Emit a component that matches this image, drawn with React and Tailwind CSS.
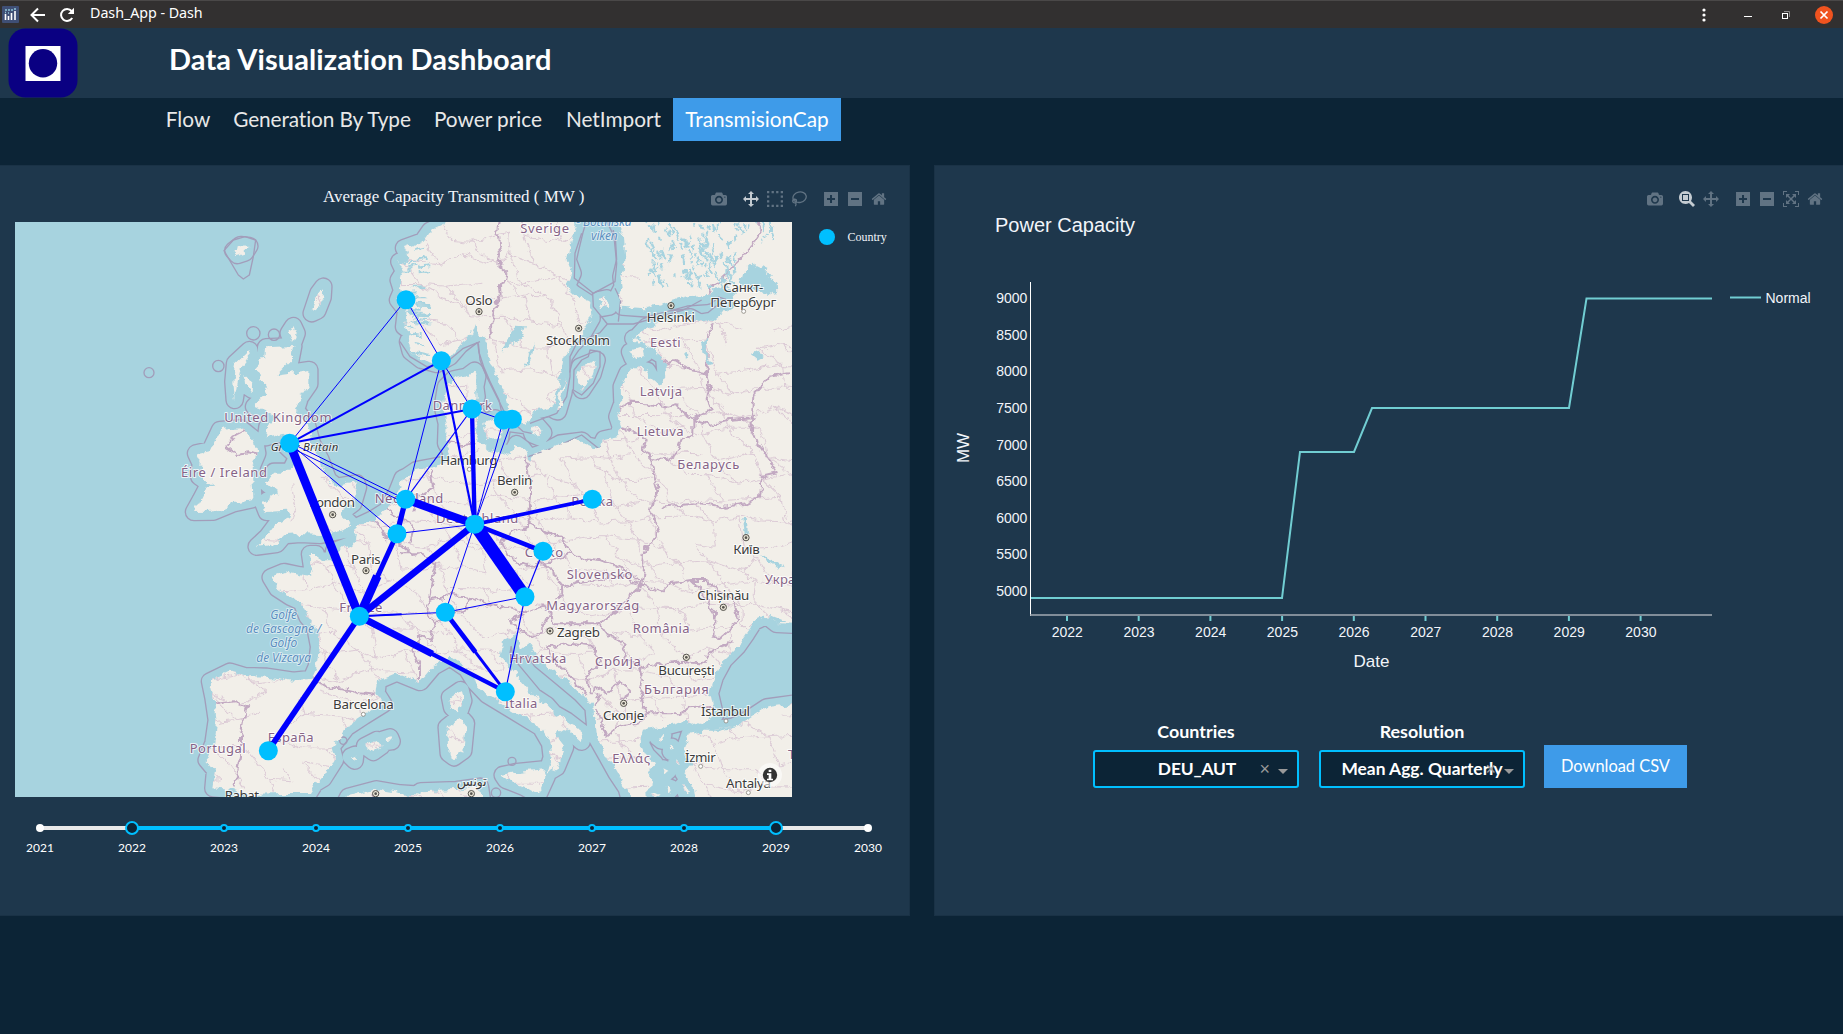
import React from "react";

/* ---------- toolbar icons ---------- */
const ICONS = {
  camera: [1000, "m500 450c-83 0-150-67-150-150 0-83 67-150 150-150 83 0 150 67 150 150 0 83-67 150-150 150z m400 150h-120c-16 0-34 13-39 29l-31 93c-6 15-23 28-40 28h-340c-16 0-34-13-39-28l-31-94c-6-15-23-28-40-28h-120c-55 0-100-45-100-100v-450c0-55 45-100 100-100h800c55 0 100 45 100 100v450c0 55-45 100-100 100z m-400-550c-138 0-250 112-250 250 0 138 112 250 250 250 138 0 250-112 250-250 0-138-112-250-250-250z m365 380c-19 0-35 16-35 35 0 19 16 35 35 35 19 0 35-16 35-35 0-19-16-35-35-35z"],
  zoom: [1000, "m1000-25l-250 251c40 63 63 138 63 218 0 224-182 406-407 406-224 0-406-182-406-406s183-406 407-406c80 0 155 22 218 62l250-250 125 125z m-812 250l0 438 437 0 0-438-437 0z m62 375l313 0 0-312-313 0 0 312z"],
  pan: [1000, "m1000 350l-187 188 0-125-250 0 0 250 125 0-188 187-187-187 125 0 0-250-250 0 0 125-188-188 186-187 0 125 252 0 0-250-125 0 187-188 188 188-125 0 0 250 250 0 0-126 187 188z"],
  plus: [875, "m1 787l0-875 875 0 0 875-875 0z m687-500l-187 0 0-187-125 0 0 187-188 0 0 125 188 0 0 187 125 0 0-187 187 0 0-125z"],
  minus: [875, "m0 788l0-876 875 0 0 876-875 0z m688-500l-500 0 0 125 500 0 0-125z"],
  auto: [1000, "m250 850l-187 0-63 0 0-62 0-188 63 0 0 188 187 0 0 62z m688 0l-188 0 0-62 188 0 0-188 62 0 0 188 0 62-62 0z m-875-938l0 188-63 0 0-188 0-62 63 0 187 0 0 62-187 0z m875 188l0-188-188 0 0-62 188 0 62 0 0 62 0 188-62 0z m-125 188l-1 0-93-94-156 156 156 156 92-93 2 0 0 250-250 0 0-2 93-92-156-156-156 156 94 92 0 2-250 0 0-250 0 0 93 93 157-156-157-156-93 94 0 0 0-250 250 0 0 0-94 93 156 157 156-157-93-93 0 0 250 0 0 250z"],
  home: [928.6, "m786 296v-267q0-15-11-26t-25-10h-214v214h-143v-214h-214q-15 0-25 10t-11 26v267q0 1 0 2t0 2l321 264 321-264q1-1 1-4z m124 39l-34-41q-5-5-12-6h-2q-7 0-12 3l-386 322-386-322q-7-4-13-4-7 2-12 7l-35 41q-4 5-3 13t6 12l401 334q18 15 42 15t43-15l136-114v109q0 8 5 13t13 5h107q8 0 13-5t5-13v-227l122-102q5-5 6-12t-4-13z"],
  select: [1000, "m0 850l0-143 143 0 0 143-143 0z m286 0l0-143 143 0 0 143-143 0z m285 0l0-143 143 0 0 143-143 0z m286 0l0-143 143 0 0 143-143 0z m-857-286l0-143 143 0 0 143-143 0z m857 0l0-143 143 0 0 143-143 0z m-857-285l0-143 143 0 0 143-143 0z m857 0l0-143 143 0 0 143-143 0z m-857-286l0-143 143 0 0 143-143 0z m286 0l0-143 143 0 0 143-143 0z m285 0l0-143 143 0 0 143-143 0z m286 0l0-143 143 0 0 143-143 0z"],
};

function ToolIcon({ name, active }) {
  const tone = active ? "text-[#c4cbd1]" : "text-[#617383]";
  if (name === "lasso") {
    return (
      <svg className={`h-4 w-4 ${tone}`} viewBox="0 0 16 16" fill="none" stroke="currentColor" strokeWidth="1.3">
        <ellipse cx="8.6" cy="6.2" rx="6.7" ry="5.2" transform="rotate(-12 8.6 6.2)" />
        <circle cx="3.6" cy="10" r="1.9" />
        <path d="M4.6 11.6Q5.6 13 4.4 15.2M2 9Q3.5 7.5 5.5 9.5" />
      </svg>
    );
  }
  const [w, d] = ICONS[name];
  return (
    <svg className={`h-4 w-4 ${tone}`} viewBox={`0 0 ${w} 1000`} fill="currentColor">
      <path d={d} transform="matrix(1 0 0 -1 0 850)" />
    </svg>
  );
}

function Toolbar({ groups, active }) {
  return (
    <div className="flex gap-4">
      {groups.map((g, i) => (
        <div key={i} className="flex gap-2">
          {g.map((n) => <ToolIcon key={n} name={n} active={n === active} />)}
        </div>
      ))}
    </div>
  );
}

/* ---------- map geometry: three units per pixel ---------- */
const shift = (dx, dy, s) =>
  s.trim().split(/\s+/).map((p) => {
    const [x, y] = p.split(",").map(Number);
    return `${x + dx},${y + dy}`;
  }).join(" ");
const nw = (s) => shift(0, 480, s);
const ne = (s) => shift(1200, 630, s);
const sw = (s) => shift(0, 1440, s);
const se = (s) => shift(1200, 1440, s);
const closed = (...p) => `M${p.join(" ")}Z`;

const SCANDINAVIA = closed(
  nw("1350,100 1345,186 1290,212 1268,244 1212,264 1225,292 1198,305 1212,335 1196,360 1206,392 1194,420 1218,450 1212,500 1236,518 1224,545 1232,575 1265,600"),
  ne("75,452 110,462 150,440 180,405 215,378 228,345 240,372 258,385 262,420 275,460 292,500 322,562 330,600 332,640 376,646 395,604 452,592 470,560 480,500 492,440 515,405 548,372 575,325 570,282 520,250 500,230 518,190 503,150 512,110 524,60 560,-60")
);
const MAINLAND = closed(
  ne("645,-60 650,36 672,80 676,150 664,200 668,230 655,255 668,290 735,295 800,278 860,262 920,258 950,232 1000,248 1005,285 960,312 935,332 900,338 870,322 800,330 740,350 712,380 742,410 792,440 797,500 780,525 755,505 742,482 708,474 682,490 665,530 667,580 652,620 662,650 655,678 612,688 600,715 560,706 545,692 482,700 430,728 388,742 368,716 350,702 332,735 300,722 262,716 236,690 225,660 238,625 218,598 230,560 226,530 232,500 224,482 200,500 160,508 138,530 128,590 140,640 138,700 156,728 145,762 92,772 50,780 20,800"),
  sw("1208,-5 1190,40 1160,92 1118,118 1070,140 1064,190 1002,214 1000,240 950,242 948,222 930,222 940,290 900,286 852,276 812,292 832,325 870,350 905,366 922,410 945,438 957,500 950,560 934,596 880,602 800,590 732,588 690,575 630,604 640,652 650,720 640,790 620,840 645,870 640,925 700,930 740,945 850,942 925,942 945,910 970,895 1005,840 995,800 1040,742 1092,708 1150,672 1130,640 1134,602 1190,578 1260,606"),
  se("62,605 100,560 150,532 200,566 225,606 262,645 340,692 422,742 450,790 455,832 440,880 470,862 495,802 468,765 500,745 545,785 550,760 500,722 462,700 440,675 402,650 352,590 302,530 310,482 352,460 362,510 388,490 422,540 482,590 542,640 580,680 588,770 622,830 650,880 680,925 700,1000 745,1000 742,930 765,910 748,870 765,850 740,825 722,790 735,752 782,744 862,722 900,738 945,705 930,640 945,590 972,540 1012,500 1040,460 1062,425 1100,408 1130,432 1300,440"),
  "2600,500"
);
const ANATOLIA = closed(se("868,764 920,750 1000,740 1050,715 1100,682 1300,655 1300,1100 905,1100 880,910 850,880 878,850 850,820"));
const BRITAIN = closed(
  nw("798,562 880,558 872,600 826,645 928,630 928,672 900,712 888,750 920,792 936,850 962,900 985,960 1010,980 1070,970"),
  sw("1074,22 1060,70 1020,100 1050,130 1035,150 960,165 900,162 852,166 830,192 770,200 802,170 832,130 872,110 860,92 800,96 790,70 832,40"),
  nw("836,1000 800,970 822,935 870,935 892,890 860,860 880,840 850,818 798,832 802,800 832,768 762,740 802,700 780,660 770,620 796,592")
);
const IRELAND = closed(nw("660,810 722,805 765,840 772,880 755,920 760,1010"), sw("755,58 700,70 640,95 582,96 602,60 622,22"), nw("640,980 598,950 602,910 588,880 632,870 646,840"));
const AFRICA = closed(sw("1020,1000 1045,950 1130,928 1200,940 1262,944"), se("62,934 170,930 240,920 252,1000"));
const ISLANDS = [
  closed(nw("700,665 705,610 748,570 750,590 722,625 712,670 704,720")),
  closed(nw("730,640 760,665 758,690 735,675")),
  closed(nw("866,520 880,498 890,520 880,548")),
  closed(nw("935,460 955,400 970,380 968,412 952,452")),
  closed(nw("700,272 722,255 748,258 735,278 712,285")),
  closed(ne("530,510 540,470 590,450 578,492 546,540")),
  closed(ne("466,602 480,550 496,508 490,550 474,604")),
  closed(ne("392,655 410,645 430,668 418,682 398,674")),
  closed(ne("250,640 285,625 308,645 300,685 262,690")),
  closed(ne("690,425 730,412 735,432 698,445")),
  closed(ne("700,385 722,380 728,395 708,398")),
  closed(ne("596,270 620,265 628,290 606,294")),
  closed(se("308,885 350,876 432,868 440,890 415,945 370,920 318,900")),
  closed(se("140,742 180,710 198,730 190,812 162,832 146,820")),
  closed(se("150,652 182,630 190,662 176,702 156,682")),
  closed(sw("1095,798 1130,780 1145,798 1120,816")),
  closed(sw("1150,778 1170,772 1175,784 1158,786")),
  closed(sw("1052,830 1066,824 1064,842")),
  closed(se("770,770 790,765 785,782")), closed(se("815,800 825,812 812,815")), closed(se("830,840 842,850 828,852")),
  closed(se("790,865 805,872 796,880")), closed(se("800,920 815,925 806,935")), closed(se("850,915 870,925 858,940")), closed(se("760,935 780,945 766,955")),
];
const LAND = [SCANDINAVIA, MAINLAND, ANATOLIA, BRITAIN, IRELAND, AFRICA, ...ISLANDS].join(" ");

const LAKES = [
  closed(ne("1020,225 1030,190 1060,160 1100,180 1130,220 1132,255 1090,245 1050,238")),
  closed(ne("305,425 322,385 345,350 375,352 362,385 330,405")),
  closed(ne("378,470 384,430 402,400 396,440")),
  closed(ne("905,395 925,380 920,440 942,462 925,465 912,430")),
  closed(ne("1052,432 1072,422 1088,436 1070,446")),
  closed(ne("850,430 860,426 862,440 852,446")),
  closed(se("890,745 930,735 985,735 1010,742 960,752 910,752")),
  closed(se("1080,222 1110,235 1150,262 1130,258 1100,240")),
  closed(se("1030,120 1040,120 1044,160 1034,162")),
  closed(se("1070,430 1110,405 1160,425 1110,440")),
].join(" ");

const line = (s) => `M${s}`;
const COUNTRY_BORDERS = [
  ne("300,0 292,60 300,130 295,165 322,190 318,215 300,222 302,260 280,300 270,350 275,385"),
  ne("1062,20 1082,60 1050,110 1000,170 940,225 920,262"),
  ne("940,340 920,380 920,440 920,490 930,520 920,570 935,600 880,630"),
  ne("750,480 780,462 825,450 870,480 920,490"),
  ne("655,600 690,578 750,580 800,590 830,582 850,605 880,630 880,670 845,690 830,730"),
  ne("662,652 700,662 740,690 732,722 760,748 800,750 832,730"),
  ne("880,630 930,645 990,630 1060,625 1055,670 1100,740 1130,790 1085,800 1080,860 1040,880 980,890 900,880 780,890"),
  ne("1055,625 1060,560 1110,500 1170,490"),
  ne("750,740 760,800 772,840 755,900"),
  ne("375,740 390,790 390,850 385,900"),
  se("385,60 395,100 380,140 330,155 300,190 340,240 380,255"),
  se("385,130 430,150 490,175 520,220 550,235 600,240 640,255 720,300"),
  se("380,255 430,250 490,230 520,215"),
  se("755,90 775,150 735,220 730,280 722,322"),
  se("480,330 530,310 600,300 640,280 720,310 785,335"),
  se("470,360 490,330 470,280 430,250"),
  se("440,400 470,430 530,430 600,430 660,380 720,325"),
  se("785,335 810,310 880,300 920,300 950,330 1000,360 1015,420 960,470 940,470 945,400 900,330 880,300"),
  se("600,430 630,470 680,490 672,540 735,560 830,545 900,550 960,500 1000,490"),
  se("675,540 720,560 732,600 720,650 745,700 840,700 870,685 940,680"),
  se("440,500 460,540 520,600 560,650"),
  se("440,500 500,490 580,500 600,550 560,590 570,640 590,620 620,640 660,600 690,640 660,660"),
  se("590,690 620,770 660,740 720,730 740,700"),
  se("580,680 600,640"),
  se("370,405 330,420 360,455 400,470 430,440 450,400 430,380 380,400 340,385 260,370 210,350 200,390 160,400 110,430"),
  se("210,350 150,345 90,360 80,400 110,430 90,480 60,470 40,510 60,560 60,600"),
  se("90,360 100,290 110,250 60,220 0,220"),
  sw("1115,118 1140,140 1160,180 1200,190 1240,225 1260,220"),
  sw("1160,90 1190,110 1230,120 1240,150 1230,190"),
  sw("1240,100 1250,50 1300,20 1290,-30"),
  sw("932,590 980,620 1040,630 1080,640 1130,645"),
  sw("640,672 700,660 745,680 730,720 720,770 720,830 710,880 700,925"),
  nw("740,808 700,830 675,860 710,885 750,880 780,890"),
  ne("140,700 190,705 230,700"),
  sw("1115,951 1130,935"),
].map(line).join(" ");

/* irregular cell mesh standing for regional borders */
function mesh() {
  const rnd = (a, b) => {
    const v = Math.sin(a * 127.1 + b * 311.7) * 43758.5453;
    return v - Math.floor(v);
  };
  const out = [];
  const W = 82, H = 66;
  const p = (i, j) => {
    const x = 400 + i * W + (j % 2 ? W / 2 : 0) + (rnd(i, j) - 0.5) * 50;
    const y = 640 + j * H + (rnd(j + 40, i + 9) - 0.5) * 44;
    return [x.toFixed(0), y.toFixed(0)];
  };
  for (let j = 0; j < 28; j++) {
    for (let i = 0; i < 25; i++) {
      const a = p(i, j);
      const finland = j < 5 && i > 17;
      const britain = j < 15 && i < 7;
      if (finland || britain) continue;
      if (rnd(i + 3, j + 7) > 0.22) out.push(`M${a}L${p(i + 1, j)}`);
      if (rnd(i + 13, j + 2) > 0.35) out.push(`M${a}L${p(i + (j % 2 ? 1 : 0), j + 1)}`);
    }
  }
  return out.join("");
}
const REGION_MESH = mesh() + "M875,1450L885,1530L870,1570";

function speckle() {
  const out = [];
  for (let i = 0; i < 170; i++) {
    const a = Math.abs(Math.sin(i * 12.9898) * 43758.5) % 1;
    const b = Math.abs(Math.sin(i * 78.233) * 12543.1) % 1;
    const c = Math.abs(Math.sin(i * 39.11) * 9543.7) % 1;
    const x = 1940 + a * 270 + (b < 0.3 ? a * 110 : 0);
    const y = 660 + b * 190;
    out.push(`M${x.toFixed(0)},${y.toFixed(0)}l${(c * 16 - 5).toFixed(0)},${(6 + c * 18).toFixed(0)}`);
  }
  for (let i = 0; i < 45; i++) {
    const a = Math.abs(Math.sin(i * 5.17) * 4358.5) % 1;
    const b = Math.abs(Math.sin(i * 8.91) * 1543.1) % 1;
    out.push(`M${(1205 + a * 50).toFixed(0)},${(740 + b * 320).toFixed(0)}l${(10 + a * 28).toFixed(0)},${(b * 16 - 8).toFixed(0)}`);
  }
  return out.join("");
}
const LAKE_SPECKLE = speckle();

const SEA_LINES = [
  closed(nw("672,272 700,240 735,230 767,240 760,290 748,345 730,357 715,345")),
  line(ne("545,70 525,130 523,205 580,250 645,215 650,160 640,60")),
  line(ne("578,250 580,290 622,342 700,342 760,325 850,300 905,270")),
  line(ne("622,342 600,368 530,400 510,440 510,500 500,560 470,610 430,625 390,640")),
  closed(ne("520,540 522,480 545,450 565,440 570,420 600,425 600,470 580,520 545,555")),
  line(ne("645,235 662,270 655,335")),
  line(ne("600,710 640,722 725,722")),
  line(ne("385,740 470,710 545,675 595,715")),
  line(ne("235,400 240,450 260,500 290,560 320,620 370,665 395,670")),
  line(ne("0,395 30,440 80,470 130,465 190,415 240,395")),
].join(" ");

const DOTS = [[447, 1118, 15], [655, 1098, 17], [760, 1000, 20], [822, 1004, 17], [1030, 2222, 11], [1488, 2378, 14], [1536, 2284, 12]];

const COUNTRIES = [
  ["United Kingdom", 673, 1266, 322], ["Éire / Ireland", 543, 1430, 258], ["Sverige", 1561, 698, 146],
  ["Danmark", 1298, 1231, 178], ["Eesti", 1950, 1041, 92], ["Latvija", 1919, 1189, 127], ["Lietuva", 1910, 1308, 141],
  ["Беларусь", 2032, 1407, 186], ["Nederland", 1124, 1508, 206], ["Deutschland", 1308, 1569, 247], ["Polska", 1714, 1518, 125],
  ["Česko", 1574, 1670, 115], ["Slovensko", 1700, 1738, 197], ["Magyarország", 1639, 1830, 279], ["România", 1898, 1899, 171],
  ["Hrvatska", 1527, 1989, 172], ["Србија", 1785, 1999, 137], ["България", 1932, 2083, 194], ["Italia", 1514, 2123, 98],
  ["Ελλάς", 1837, 2289, 113], ["España", 803, 2226, 138], ["Portugal", 569, 2258, 168], ["France", 1018, 1837, 129],
  ["Україна", 2294, 1751, 150], ["Türkiye", 2364, 2276, 140],
];
const CITIES = [
  ["Oslo", 1396, 915, 82, 1437, 935], ["Stockholm", 1638, 1035, 192, 1736, 985], ["Helsinki", 1940, 965, 145, 2013, 917],
  ["Санкт-", 2170, 875, 120], ["Петербург", 2131, 921, 198], ["Hamburg", 1321, 1394, 171], ["Berlin", 1491, 1456, 106, 1544, 1477],
  ["London", 928, 1522, 137, 998, 1544], ["Paris", 1053, 1691, 89, 1098, 1712], ["Київ", 2200, 1661, 79, 2238, 1613],
  ["Chișinău", 2092, 1801, 156, 2170, 1822], ["Zagreb", 1671, 1911, 129, 1650, 1893], ["București", 1975, 2025, 169, 2059, 1972],
  ["Скопје", 1809, 2160, 123, 1871, 2110], ["İstanbul", 2103, 2148, 147], ["İzmir", 2055, 2285, 92], ["Antalya", 2178, 2363, 135],
  ["Barcelona", 999, 2128, 182], ["Rabat", 674, 2401, 103], ["تونس", 1370, 2358, 90, 1414, 2381],
];
const SMALL_TOWNS = [[2178, 2163], [2102, 2299], [2245, 2378], [1090, 2143], [1408, 1408], [2231, 934]];
const SEAS = [
  ["- Bottniska", 1729, 679, 166], ["viken", 1773, 721, 80], ["Golfe", 811, 1857, 80], ["de Gascogne /", 738, 1899, 226],
  ["Golfo", 809, 1942, 83], ["de Vizcaya", 769, 1985, 164],
];

const N = {
  bergen: [1218, 899], kris: [1324, 1082], dk: [1416, 1227], se1: [1510, 1260], se2: [1537, 1258], gb: [869, 1330],
  nl: [1217, 1498], be: [1191, 1601], de: [1424, 1573], pl: [1777, 1498], cz: [1629, 1654], at: [1575, 1790],
  ch: [1336, 1837], fr: [1078, 1849], it: [1516, 2075], es: [805, 2252],
};
const LINKS = [
  [N.gb, N.fr, 26], [N.de, N.at, 38], [N.nl, N.de, 24], [N.fr, N.de, 20], [N.dk, N.de, 13], [N.fr, N.es, 17], [N.nl, N.be, 16],
  [N.be, N.fr, 15], [N.fr, [1132, 1728], 26], [N.fr, N.it, 13], [N.fr, [1297, 1962], 21], [N.ch, N.it, 9], [N.ch, [1426, 1956], 14],
  [N.de, N.cz, 14], [N.de, N.pl, 11], [N.gb, N.kris, 6], [N.gb, N.dk, 6], [N.kris, N.de, 6.5], [N.fr, [1205, 1843], 6],
  [N.gb, N.bergen, 3], [[875, 1330], N.nl, 3], [[862, 1338], [1217, 1510], 3], [N.gb, N.be, 3], [N.bergen, N.kris, 3], [N.kris, N.dk, 3],
  [N.kris, N.nl, 3], [N.dk, N.nl, 3.5], [N.dk, N.se1, 3], [N.se1, N.de, 3], [N.se2, N.de, 3], [N.be, N.de, 3], [N.de, N.ch, 3],
  [N.ch, N.at, 3], [N.ch, N.fr, 3], [N.cz, N.at, 3.5], [N.at, N.it, 3.5],
];

function EuropeMap() {
  return (
    <svg className="block h-[575px] w-[777px]" viewBox="45 666 2331 1725" fontFamily='"Noto Sans", "DejaVu Sans", sans-serif'>
      <defs>
        <filter id="coast" filterUnits="userSpaceOnUse" x="45" y="620" width="2340" height="1780">
          <feTurbulence type="fractalNoise" baseFrequency="0.035" numOctaves="4" seed="4" />
          <feDisplacementMap in="SourceGraphic" scale="28" xChannelSelector="R" yChannelSelector="G" />
        </filter>
        <clipPath id="onLand"><path d={LAND} /></clipPath>
      </defs>
      <rect x="45" y="666" width="2331" height="1725" fill="#a7d3df" />
      <g strokeLinejoin="round">
        <path d={LAND} fill="none" stroke="#a29dba" strokeWidth="56" />
        <path d={LAND} fill="none" stroke="#a7d3df" strokeWidth="48" />
      </g>
      <g fill="none" stroke="#a29dba" strokeWidth="4" strokeLinejoin="round">
        <path d={SEA_LINES} />
        {DOTS.map(([x, y, r], i) => <circle key={i} cx={x} cy={y} r={r} />)}
      </g>
      <g filter="url(#coast)">
        <path d={LAND} fill="#f2efe9" />
        <g clipPath="url(#onLand)" fill="none">
          <path d={REGION_MESH} stroke="#dccbd6" strokeWidth="3.2" />
          <path d={COUNTRY_BORDERS} stroke="#c2a9c2" strokeWidth="6" strokeLinejoin="round" />
          <path d={LAKES} fill="#a7d3df" />
          <path d={LAKE_SPECKLE} stroke="#a7d3df" strokeWidth="6" />
        </g>
      </g>

      <g fontSize="39" fill="#866387" stroke="#fff" strokeOpacity="0.75" strokeWidth="6" paintOrder="stroke" strokeLinejoin="round">
        {COUNTRIES.map(([t, x, y, w]) => <text key={t} x={x} y={y} textLength={w}>{t}</text>)}
      </g>
      <g fontSize="36" fontStyle="italic" fill="#5b8fc0" stroke="#fff" strokeOpacity="0.6" strokeWidth="5" paintOrder="stroke">
        {SEAS.map(([t, x, y, w]) => <text key={t} x={x} y={y} textLength={w}>{t}</text>)}
      </g>
      <text x="812" y="1352" textLength="203" fontSize="34" fontStyle="italic" fill="#333" stroke="#fff" strokeOpacity="0.7" strokeWidth="5" paintOrder="stroke">Great Britain</text>
      <g fontSize="40" fill="#3b3b3b" stroke="#fff" strokeOpacity="0.75" strokeWidth="6" paintOrder="stroke">
        {CITIES.map(([t, x, y, w]) => <text key={t} x={x} y={y} textLength={w}>{t}</text>)}
      </g>
      {CITIES.filter((c) => c[4]).map(([t, , , , x, y]) => (
        <g key={t}>
          <circle cx={x} cy={y} r="9.5" fill="#e9e4d6" stroke="#55534e" strokeWidth="3" />
          <circle cx={x} cy={y} r="4" fill="#55534e" />
        </g>
      ))}
      <circle cx="1127" cy="2381" r="9.5" fill="#e9e4d6" stroke="#55534e" strokeWidth="3" />
      <circle cx="1127" cy="2381" r="4" fill="#55534e" />
      {SMALL_TOWNS.map(([x, y], i) => <circle key={i} cx={x} cy={y} r="6" fill="#fff" stroke="#8a8780" strokeWidth="2.5" />)}

      <g stroke="#0000ff">
        {LINKS.map(([a, b, w], i) => <line key={i} x1={a[0]} y1={a[1]} x2={b[0]} y2={b[1]} strokeWidth={w} />)}
      </g>
      <g fill="#00bfff">
        {Object.entries(N).map(([k, [x, y]]) => <circle key={k} cx={x} cy={y} r="28.5" />)}
      </g>

      <circle cx="2310" cy="2325" r="36" fill="#fff" fillOpacity="0.55" />
      <circle cx="2310" cy="2325" r="21.5" fill="#333" />
      <path d="M2306 2309h8v7h-8zM2301 2320h13v16h5v5h-18v-5h5v-11h-5z" fill="#fff" />
    </svg>
  );
}

/* ---------- line chart ---------- */
const SANS = '"Liberation Sans", Arial, sans-serif';
function CapacityChart() {
  return (
    <svg className="-ml-px block h-[480px] w-[909px]" viewBox="934 210 909 480" fontFamily={SANS} fill="#f2f5fa">
      <text x="995" y="232" fontSize="20">Power Capacity</text>
      <path d="M1031 598H1282L1300 452H1354L1372 408H1569L1586.5 298.5H1712" fill="none" stroke="#71cdd2" strokeWidth="2" />
      <path d="M1030.5 282V616" stroke="#fff" strokeWidth="1" fill="none" />
      <path d="M1030 615H1712" stroke="#a3abb3" strokeWidth="1.6" fill="none" />
      {[9000, 8500, 8000, 7500, 7000, 6500, 6000, 5500, 5000].map((v, i) => (
        <text key={v} x="1027.3" y={303.1 + i * 36.6} fontSize="14" textAnchor="end">{v}</text>
      ))}
      {[2022, 2023, 2024, 2025, 2026, 2027, 2028, 2029, 2030].map((v, i) => (
        <g key={v}>
          <path d={`M${1067 + i * 71.7} 616v5`} stroke="#71cdd2" strokeWidth="2" />
          <text x={1067.3 + i * 71.7} y="637" fontSize="14" textAnchor="middle">{v}</text>
        </g>
      ))}
      <text x="1371.5" y="667" fontSize="17" textAnchor="middle">Date</text>
      <text transform="translate(969 448) rotate(-90)" fontSize="17" textAnchor="middle">MW</text>
      <path d="M1730 297.5H1761" stroke="#71cdd2" strokeWidth="2" />
      <text x="1765.5" y="303" fontSize="14">Normal</text>
    </svg>
  );
}

function Dropdown({ label, value, nudge }) {
  return (
    <div className="w-[206px]">
      <div className="text-center text-[17.9px] leading-[26px] font-bold text-white">{label}</div>
      <div className="relative mt-[6px] flex h-[38px] items-center justify-center rounded-[3px] border-2 border-[#00bfff] bg-[#0c2436] text-[17.4px] font-bold whitespace-nowrap text-white">
        <span className={nudge}>{value}</span>
        <span className="absolute right-[27px] font-['Liberation_Sans',sans-serif] text-[18px] font-normal text-[#999]">×</span>
        <span className="absolute top-[17px] right-[9px] border-x-5 border-t-5 border-x-transparent border-t-[#999]" />
      </div>
    </div>
  );
}

const YEARS = [2021, 2022, 2023, 2024, 2025, 2026, 2027, 2028, 2029, 2030];
function YearSlider() {
  return (
    <div className="mt-[23px] ml-[-6px] w-[920px]">
      <div className="grid w-[920px] grid-cols-10">
        {YEARS.map((y, i) => {
          const big = y === 2022 || y === 2029;
          const end = y === 2021 || y === 2030;
          const on = "bg-[#00bfff]";
          const off = "bg-[#e9e9e9]";
          const left = i === 0 ? "bg-transparent" : i === 1 || i === 9 ? off : on;
          const right = i === 9 ? "bg-transparent" : i === 0 || i === 8 ? off : on;
          return (
            <div key={y} className="flex flex-col items-center">
              <div className="relative flex h-4 w-full items-center justify-center">
                <div className={`h-1 flex-1 ${left}`} />
                <div className={`h-1 flex-1 ${right}`} />
                <div className={`absolute rounded-full ${big ? "size-[14px] border-2 border-[#00bfff] bg-[#0c2436]" : end ? "size-2 bg-white" : "size-2 border-2 border-[#00bfff] bg-[#0c2436]"}`} />
              </div>
              <div className="mt-1 text-xs leading-4 text-white">{y}</div>
            </div>
          );
        })}
      </div>
    </div>
  );
}

function TitleBar() {
  return (
    <div className="flex h-7 items-center border-t border-[#4a4848] bg-[#323030] pb-px text-white">
      <svg className="ml-[2px] size-[17px]" viewBox="0 0 17 17">
        <rect width="17" height="17" rx="1" fill="#3f4f75" />
        <path d="M3.5 8v6M6.5 10v4M9.5 7v7M13 5v9" stroke="#fff" strokeWidth="1.6" />
        <path d="M3 4h2M6 4h2M9 4h2M12 3h2M3 6.5h1M6 7h1" stroke="#8ec6d8" strokeWidth="1.3" />
      </svg>
      <svg className="mt-px ml-[11px] size-4" viewBox="0 0 16 16" fill="none" stroke="currentColor" strokeWidth="2">
        <path d="M15 8H2M8 1.5L1.5 8L8 14.5" />
      </svg>
      <svg className="mt-px ml-[13px] size-4" viewBox="0 0 16 16">
        <path d="M13.2 11A6 6 0 1 1 12.6 4" fill="none" stroke="currentColor" strokeWidth="2" />
        <path d="M15 0.8V7H8.8z" fill="currentColor" />
      </svg>
      <span className="-mt-[3px] ml-[15px] font-['Noto_Sans',sans-serif] text-[14.3px] tracking-[-0.05px]">Dash_App - Dash</span>
      <div className="mt-px ml-auto flex items-center">
        <svg className="h-[14px] w-1" viewBox="0 0 4 14" fill="currentColor">
          <circle cx="2" cy="2" r="1.6" /><circle cx="2" cy="7" r="1.6" /><circle cx="2" cy="12" r="1.6" />
        </svg>
        <div className="mt-1 ml-[38px] h-px w-2 bg-white" />
        <svg className="ml-[30px] size-2" viewBox="0 0 8 8" fill="none">
          <path d="M2 .5H7.5V6" stroke="#8b8989" />
          <rect x=".5" y="2.5" width="5" height="5" stroke="#fff" />
        </svg>
        <svg className="mr-[10px] ml-[25px] size-[18px]" viewBox="0 0 18 18">
          <circle cx="9" cy="9" r="9" fill="#f0531f" />
          <path d="M5.5 5.5l7 7M12.5 5.5l-7 7" stroke="#fff" strokeWidth="1.7" />
        </svg>
      </div>
    </div>
  );
}

const TABS = [
  ["Flow", "w-[68px]"],
  ["Generation By Type", "w-[200px] tracking-[-0.1px]"],
  ["Power price", "w-[132px]"],
  ["NetImport", "w-[119px]"],
  ["TransmisionCap", "w-[168px]"],
];

export default function App() {
  return (
    <div className="h-[1034px] w-[1843px] overflow-hidden bg-[#0c2436] font-['Lato',sans-serif] [font-variant-ligatures:none]">
      <TitleBar />
      <header className="flex h-[70px] items-start bg-[#1e374c]">
        <svg className="ml-2 h-[70px] w-[70px]" viewBox="0 0 70 70">
          <rect x=".5" y=".5" width="69" height="69" rx="17" fill="#0a0082" />
          <rect x="17.5" y="18" width="35" height="35" fill="#fff" />
          <circle cx="35" cy="35.2" r="14.2" fill="#0a0082" />
        </svg>
        <h1 className="mt-[13px] ml-[91px] text-[29px] leading-9 font-bold tracking-[0.1px] text-white">Data Visualization Dashboard</h1>
      </header>
      <nav className="ml-[154px] flex h-[43px]">
        {TABS.map(([t, size]) => (
          <div key={t} className={`pt-[5px] text-center text-[20.8px] leading-8 whitespace-nowrap ${size} ${t === "TransmisionCap" ? "bg-[#3e9be9] text-white" : "text-[#e8e8e8]"}`}>{t}</div>
        ))}
      </nav>
      <main className="mt-6 flex h-[751px] gap-6">
        <section className="w-[910px] border border-l-0 border-[#1a3246] bg-[#1e374c]">
          <div className="flex h-[56px]">
            <div className="w-[262px] pt-[19px] pl-[323px] font-['Liberation_Serif',serif] text-[17px] leading-6 whitespace-nowrap text-[#f2f5fa]">Average Capacity Transmitted ( MW )</div>
            <div className="mt-[25px] ml-auto mr-[22px]">
              <Toolbar groups={[["camera"], ["pan", "select", "lasso"], ["plus", "minus", "home"]]} active="pan" />
            </div>
          </div>
          <div className="flex pl-[15px]">
            <EuropeMap />
            <div className="mt-[6px] ml-[27px] flex h-[18px] items-center gap-[12.5px] font-['Liberation_Serif',serif] text-xs text-[#f2f5fa]">
              <span className="size-4 rounded-full bg-[#00bfff]" />
              Country
            </div>
          </div>
          <YearSlider />
        </section>
        <section className="w-[909px] border border-r-0 border-[#1a3246] bg-[#1e374c]">
          <div className="flex h-[44px] justify-end pt-[25px] pr-[20px]">
            <Toolbar groups={[["camera"], ["zoom", "pan"], ["plus", "minus", "auto", "home"]]} active="zoom" />
          </div>
          <CapacityChart />
          <div className="mt-[28px] ml-[158px] flex">
            <Dropdown label="Countries" value="DEU_AUT" nudge="pl-[2px] tracking-[-0.15px]" />
            <div className="w-5" />
            <Dropdown label="Resolution" value="Mean Agg. Quarterly" nudge="" />
            <button className="mt-[27px] ml-[19px] h-[43px] w-[143px] bg-[#3e9be9] text-[16.4px] text-white">Download CSV</button>
          </div>
        </section>
      </main>
    </div>
  );
}
